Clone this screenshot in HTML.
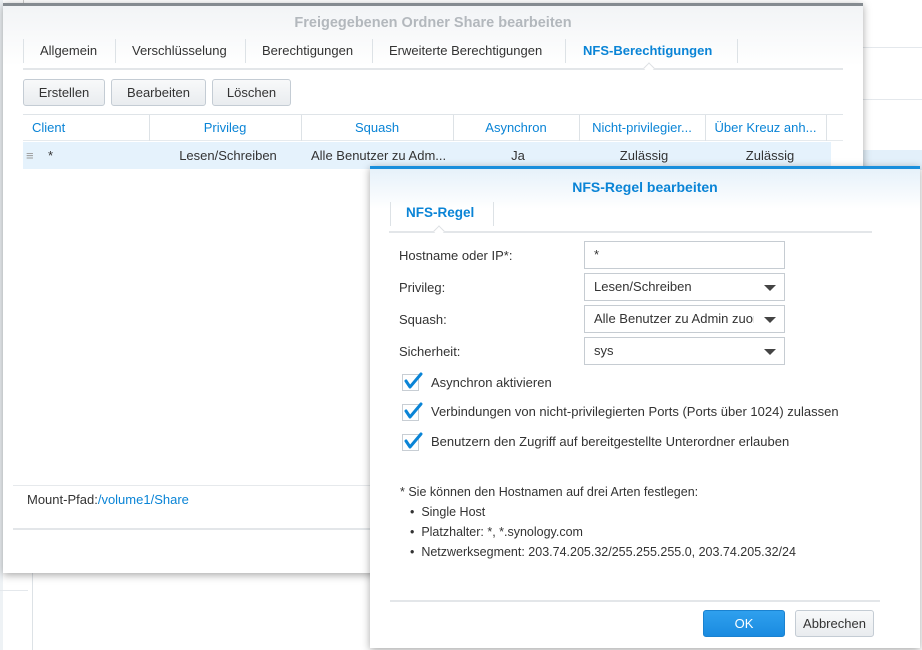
<!DOCTYPE html>
<html><head><meta charset="utf-8"><style>
*{box-sizing:border-box;margin:0;padding:0}
body{width:922px;height:650px;position:relative;overflow:hidden;background:#fff;font-family:"Liberation Sans",sans-serif;font-size:13px;color:#333}
.abs{position:absolute}
.blue{color:#0a84d6}
.dlg{position:absolute;background:#fff;box-shadow:0 2px 8px rgba(0,0,0,.35)}
.btn{position:absolute;height:27px;border:1px solid #c4ccd4;border-radius:3px;background:linear-gradient(#f8f9fa,#e9ecef);text-align:center;line-height:25px;font-size:13px;color:#333}
.sel{position:absolute;left:584px;width:201px;height:28px;border:1px solid #c6ccd2;background:#fff;padding-left:9px;line-height:26px;font-size:13px;white-space:nowrap;overflow:hidden}
.sel .ar{position:absolute;right:8px;top:11px;width:0;height:0;border-left:6px solid transparent;border-right:6px solid transparent;border-top:6px solid #444}
.sel .cov{position:absolute;right:0;top:0;width:30px;height:26px;background:#fff}
.cb{position:absolute;left:402px;width:17px;height:17px;border:1px solid #c8ced4;background:#fff}
.lbl{position:absolute;font-size:13px}
.tabsep{position:absolute;width:1px;background:#dde2e6}
</style></head><body>
<div class="abs" style="left:863px;top:47px;width:59px;height:1px;background:#e4e8ec"></div>
<div class="abs" style="left:863px;top:99px;width:59px;height:1px;background:#e4e8ec"></div>
<div class="abs" style="left:863px;top:150px;width:59px;height:20px;background:#e3f0fa"></div>
<div class="abs" style="left:0;top:0;width:3px;height:650px;background:#eef2f5"></div>
<div class="abs" style="left:32px;top:573px;width:1px;height:77px;background:#dde2e6"></div>
<div class="abs" style="left:0;top:590px;width:28px;height:1px;background:#e4e8ec"></div>
<div class="abs" style="left:23px;top:0;width:1px;height:4px;background:#ccc"></div>

<div class="dlg" style="left:3px;top:3px;width:860px;height:570px;border-top:3px solid #858b90">
  <div class="abs" style="left:0;top:0;width:860px;height:60px;background:linear-gradient(#f2f4f6,#fff)"></div>
  <div class="abs" style="left:0;top:9px;width:860px;text-align:center;font-weight:bold;font-size:14.5px;color:#b3b8bd">Freigegebenen Ordner Share bearbeiten</div>
</div>
<div class="tabsep" style="left:23px;top:39px;height:24px"></div>
<div class="lbl" style="left:40px;top:43px">Allgemein</div>
<div class="tabsep" style="left:115px;top:39px;height:24px"></div>
<div class="lbl" style="left:132px;top:43px">Verschlüsselung</div>
<div class="tabsep" style="left:245px;top:39px;height:24px"></div>
<div class="lbl" style="left:262px;top:43px">Berechtigungen</div>
<div class="tabsep" style="left:372px;top:39px;height:24px"></div>
<div class="lbl" style="left:389px;top:43px">Erweiterte Berechtigungen</div>
<div class="tabsep" style="left:565px;top:39px;height:24px"></div>
<div class="lbl blue" style="left:583px;top:43px;font-weight:bold">NFS-Berechtigungen</div>
<div class="tabsep" style="left:737px;top:39px;height:24px"></div>
<div class="abs" style="left:23px;top:68px;width:820px;height:2px;background:#e3e6e9"></div>
<div class="abs" style="left:645px;top:64px;width:8px;height:8px;background:#fff;border-left:1px solid #dde0e3;border-top:1px solid #dde0e3;transform:rotate(45deg)"></div>

<div class="btn" style="left:23px;top:79px;width:82px">Erstellen</div>
<div class="btn" style="left:111px;top:79px;width:95px">Bearbeiten</div>
<div class="btn" style="left:212px;top:79px;width:79px">Löschen</div>

<div class="abs" style="left:23px;top:114px;width:820px;height:1px;background:#dfe4e8"></div>
<div class="abs" style="left:23px;top:115px;width:820px;height:26px;border-bottom:1px solid #e6eaed"></div>
<div class="tabsep" style="left:149px;top:115px;height:26px"></div>
<div class="tabsep" style="left:301px;top:115px;height:26px"></div>
<div class="tabsep" style="left:453px;top:115px;height:26px"></div>
<div class="tabsep" style="left:579px;top:115px;height:26px"></div>
<div class="tabsep" style="left:705px;top:115px;height:26px"></div>
<div class="tabsep" style="left:826px;top:115px;height:26px"></div>
<div class="lbl blue" style="left:32px;top:120px">Client</div>
<div class="lbl blue" style="left:149px;top:120px;width:152px;text-align:center">Privileg</div>
<div class="lbl blue" style="left:301px;top:120px;width:152px;text-align:center">Squash</div>
<div class="lbl blue" style="left:453px;top:120px;width:126px;text-align:center">Asynchron</div>
<div class="lbl blue" style="left:579px;top:120px;width:126px;text-align:center">Nicht-privilegier...</div>
<div class="lbl blue" style="left:705px;top:120px;width:121px;text-align:center">Über Kreuz anh...</div>
<div class="abs" style="left:23px;top:142px;width:808px;height:27px;background:#e5f2fc"></div>
<div class="lbl" style="left:26px;top:148px;color:#999">≡</div>
<div class="lbl" style="left:48px;top:148px">*</div>
<div class="lbl" style="left:149px;top:148px;width:158px;text-align:center">Lesen/Schreiben</div>
<div class="lbl" style="left:311px;top:148px">Alle Benutzer zu Adm...</div>
<div class="lbl" style="left:453px;top:148px;width:130px;text-align:center">Ja</div>
<div class="lbl" style="left:579px;top:148px;width:130px;text-align:center">Zulässig</div>
<div class="lbl" style="left:705px;top:148px;width:130px;text-align:center">Zulässig</div>

<div class="abs" style="left:13px;top:485px;width:360px;height:1px;background:#e6e9ec"></div>
<div class="lbl" style="left:27px;top:492px">Mount-Pfad:<span class="blue">/volume1/Share</span></div>
<div class="abs" style="left:13px;top:528px;width:360px;height:2px;background:#e3e6e9"></div>

<div class="dlg" style="left:370px;top:166px;width:550px;height:482px;border-top:3px solid #1a8fdc">
  <div class="abs" style="left:0;top:0;width:550px;height:40px;background:linear-gradient(#e6f1fa,#fff)"></div>
  <div class="abs" style="left:0;top:10px;width:550px;text-align:center;font-weight:bold;font-size:14px;color:#0a84d6">NFS-Regel bearbeiten</div>
</div>
<div class="tabsep" style="left:390px;top:202px;height:24px"></div>
<div class="lbl blue" style="left:406px;top:205px;font-weight:bold;font-size:13.5px">NFS-Regel</div>
<div class="tabsep" style="left:493px;top:202px;height:24px"></div>
<div class="abs" style="left:389px;top:231px;width:483px;height:2px;background:#e3e6e9"></div>
<div class="abs" style="left:435px;top:227px;width:8px;height:8px;background:#fff;border-left:1px solid #dde0e3;border-top:1px solid #dde0e3;transform:rotate(45deg)"></div>

<div class="lbl" style="left:399px;top:248px">Hostname oder IP*:</div>
<div class="sel" style="top:241px">*</div>
<div class="lbl" style="left:399px;top:280px">Privileg:</div>
<div class="sel" style="top:273px">Lesen/Schreiben<span class="ar"></span></div>
<div class="lbl" style="left:399px;top:312px">Squash:</div>
<div class="sel" style="top:305px">Alle Benutzer zu Admin zuordnen<span class="cov"></span><span class="ar"></span></div>
<div class="lbl" style="left:399px;top:344px">Sicherheit:</div>
<div class="sel" style="top:337px">sys<span class="ar"></span></div>

<div class="cb" style="top:374px"></div>
<div class="cb" style="top:404px"></div>
<div class="cb" style="top:434px"></div>
<svg class="abs" style="left:0;top:0" width="922" height="650">
<g fill="none" stroke="#0a84d6" stroke-width="3" stroke-linecap="round" stroke-linejoin="round">
<path d="M406 381 L410 387 L421 374"/>
<path d="M406 411 L410 417 L421 404"/>
<path d="M406 441 L410 447 L421 434"/>
</g></svg>
<div class="lbl" style="left:431px;top:375px">Asynchron aktivieren</div>
<div class="lbl" style="left:431px;top:404px">Verbindungen von nicht-privilegierten Ports (Ports über 1024) zulassen</div>
<div class="lbl" style="left:431px;top:434px">Benutzern den Zugriff auf bereitgestellte Unterordner erlauben</div>

<div class="lbl" style="left:400px;top:485px;font-size:12.5px">* Sie können den Hostnamen auf drei Arten festlegen:</div>
<div class="lbl" style="left:410px;top:505px;font-size:12.5px">•&nbsp; Single Host</div>
<div class="lbl" style="left:410px;top:525px;font-size:12.5px">•&nbsp; Platzhalter: *, *.synology.com</div>
<div class="lbl" style="left:410px;top:545px;font-size:12.5px">•&nbsp; Netzwerksegment: 203.74.205.32/255.255.255.0, 203.74.205.32/24</div>

<div class="abs" style="left:390px;top:600px;width:490px;height:2px;background:#e3e6e9"></div>
<div class="btn" style="left:703px;top:610px;width:82px;background:linear-gradient(#2fa0ee,#1a8be0);border-color:#1a82d0;color:#fff">OK</div>
<div class="btn" style="left:795px;top:610px;width:79px">Abbrechen</div>
</body></html>
